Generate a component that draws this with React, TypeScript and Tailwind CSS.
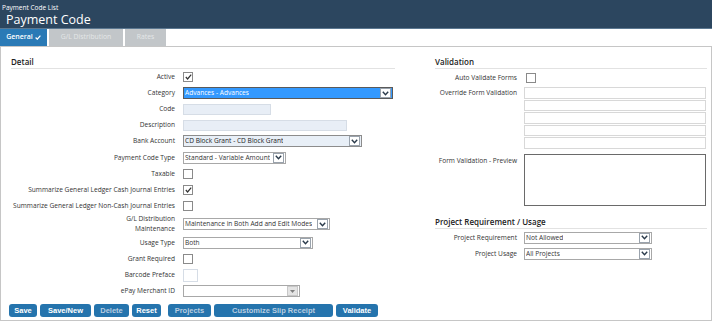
import React from 'react';

const Chevron = ({ muted = false }: { muted?: boolean }) => (
  <span className={`flex h-[10px] w-[11px] shrink-0 items-center justify-center border ${muted ? 'border-[#c8c8c8] bg-[#e4e4e4]' : 'border-[#9aa3ad] bg-white'}`}>
    {muted ? (
      <svg width="5" height="3" viewBox="0 0 5 3"><path d="M0 0h5L2.5 3z" fill="#808080" /></svg>
    ) : (
      <svg width="7" height="5" viewBox="0 0 7 5"><path d="M0.8 0.8L3.5 3.8L6.2 0.8" fill="none" stroke="#2a3a4a" strokeWidth="1.4" /></svg>
    )}
  </span>
);

const Select = ({ value, w, tone = 'white', muted = false }: { value: string; w: string; tone?: 'white' | 'blue' | 'active'; muted?: boolean }) => {
  const bg = tone === 'active' ? 'bg-[#3399ff] text-white border-[#5a5a5a]' : tone === 'blue' ? 'bg-[#e8eff7] text-[#222] border-[#8c8c8c]' : 'bg-white text-[#333] border-[#a8a8a8]';
  return (
    <div className={`flex h-[12px] items-center justify-between border pl-[1px] pr-[1px] ${bg} ${w}`}>
      <span className="overflow-hidden whitespace-nowrap leading-[10px]">{value}</span>
      <Chevron muted={muted} />
    </div>
  );
};

const Check = ({ checked = false }: { checked?: boolean }) => (
  <span className="flex h-[10px] w-[10px] items-center justify-center border border-[#8a8a8a] bg-white">
    {checked && (
      <svg width="7" height="6" viewBox="0 0 7 6"><path d="M0.8 3L2.6 5L6.2 0.6" fill="none" stroke="#333" strokeWidth="1.2" /></svg>
    )}
  </span>
);

const Input = ({ w, h = 'h-[11px]', bg = 'bg-[#e8eef6]' }: { w: string; h?: string; bg?: string }) => (
  <div className={`${w} ${h} ${bg} border border-[#d6dde6]`} />
);

const Row = ({ label, children, h = 'h-[16.1px]' }: { label: React.ReactNode; children: React.ReactNode; h?: string }) => (
  <div className={`flex items-center ${h}`}>
    <div className="w-[165px] pr-[1px] text-right leading-[10px] text-[#333]">{label}</div>
    <div className="ml-[7px] flex items-center">{children}</div>
  </div>
);

const Btn = ({ label, w, disabled = false }: { label: string; w: string; disabled?: boolean }) => (
  <button
    className={`${w} h-[13px] rounded-[3px] bg-[#2574ad] text-[7.5px] font-bold leading-none ${disabled ? 'text-[#b9cde0]' : 'text-white'}`}
    style={{ fontFamily: '"Liberation Sans", Arial, sans-serif' }}
  >
    {label}
  </button>
);

const Heading = ({ children, className = '' }: { children: React.ReactNode; className?: string }) => (
  <div className={`border-b border-[#e2e2e2] pb-[1px] text-[8px] font-semibold leading-[10px] text-[#222] ${className}`}>{children}</div>
);

export default function App() {
  return (
    <div className="flex h-[328px] w-[712px] flex-col bg-white text-[6.6px]" style={{ fontFamily: '"Open Sans", "Noto Sans", sans-serif' }}>
      {/* Header */}
      <div className="h-[29px] border-b border-[#5c7891] bg-[#2c465f] pl-[2px] text-white">
        <div className="pt-[4px] text-[6.5px] leading-[8px]">Payment Code List</div>
        <div className="pl-[4px] text-[12.5px] leading-[15px]">Payment Code</div>
      </div>

      {/* Tabs */}
      <div className="flex h-[18px] border-b border-[#c6c6c6]">
        <div className="flex w-[47px] items-center justify-center gap-[2px] bg-[#2a7ab6] text-[7px] font-semibold text-white">
          General
          <svg width="6" height="5" viewBox="0 0 6 5"><path d="M0.6 2.5L2.3 4.2L5.4 0.6" fill="none" stroke="white" strokeWidth="1.2" /></svg>
        </div>
        <div className="ml-[2px] flex w-[74px] items-center justify-center bg-[#c2c6c9] text-[6.8px] text-[#e4e6e8]">G/L Distribution</div>
        <div className="ml-[2px] flex w-[41px] items-center justify-center bg-[#c2c6c9] text-[6.8px] text-[#e4e6e8]">Rates</div>
      </div>

      {/* Body */}
      <div className="flex h-[274px] border-x border-b border-[#c6c6c6]">
        {/* Left column */}
        <div className="ml-[10px] flex w-[384px] flex-col pt-[10px]">
          <Heading>Detail</Heading>
          <Row label="Active"><Check checked /></Row>
          <Row label="Category"><Select value="Advances - Advances" w="w-[210px]" tone="active" /></Row>
          <Row label="Code"><Input w="w-[88px]" /></Row>
          <Row label="Description"><Input w="w-[164px]" /></Row>
          <Row label="Bank Account"><Select value="CD Block Grant - CD Block Grant" w="w-[179px]" tone="blue" /></Row>
          <Row label="Payment Code Type"><Select value="Standard - Variable Amount" w="w-[103px]" /></Row>
          <Row label="Taxable"><Check /></Row>
          <Row label="Summarize General Ledger Cash Journal Entries"><Check checked /></Row>
          <Row label="Summarize General Ledger Non-Cash Journal Entries"><Check /></Row>
          <Row h="h-[21px]" label={<><div>G/L Distribution</div><div>Maintenance</div></>}>
            <Select value="Maintenance in Both Add and Edit Modes" w="w-[147px]" />
          </Row>
          <Row label="Usage Type"><Select value="Both" w="w-[130px]" /></Row>
          <Row label="Grant Required"><Check /></Row>
          <Row label="Barcode Preface"><Input w="w-[15px]" h="h-[13px]" bg="bg-white" /></Row>
          <Row label="ePay Merchant ID"><Select value="" w="w-[117px]" muted /></Row>
          <div className="-ml-[2px] mt-[5px] flex gap-[3px]">
            <Btn label="Save" w="w-[28px]" />
            <Btn label="Save/New" w="w-[51px]" />
            <Btn label="Delete" w="w-[35px]" disabled />
            <Btn label="Reset" w="w-[29px]" />
            <div className="w-[1px]" />
            <Btn label="Projects" w="w-[43px]" disabled />
            <Btn label="Customize Slip Receipt" w="w-[119px]" disabled />
            <Btn label="Validate" w="w-[42px]" />
          </div>
        </div>

        {/* Right column */}
        <div className="ml-[40px] flex w-[272px] flex-col pt-[10px]">
          <Heading>Validation</Heading>
          <div className="mt-[4px] flex items-center">
            <div className="w-[82px] text-right text-[#333]">Auto Validate Forms</div>
            <div className="ml-[9px]"><Check /></div>
          </div>
          <div className="mt-[4px] flex">
            <div className="w-[82px] pt-[1px] text-right leading-[10px] text-[#333]">Override Form Validation</div>
            <div className="ml-[7px] flex flex-col gap-[1px]">
              {[0, 1, 2, 3, 4].map((i) => (
                <div key={i} className="h-[11.5px] w-[182px] border border-[#d8d8d8] bg-white" />
              ))}
            </div>
          </div>
          <div className="mt-[5px] flex">
            <div className="w-[82px] pt-[2px] text-right leading-[10px] text-[#333]">Form Validation - Preview</div>
            <div className="ml-[7px] h-[52px] w-[182px] border border-[#6a6a6a] bg-white" />
          </div>
          <Heading className="mt-[11px]">Project Requirement / Usage</Heading>
          <div className="mt-[3px] flex items-center">
            <div className="w-[82px] text-right text-[#333]">Project Requirement</div>
            <div className="ml-[7px]"><Select value="Not Allowed" w="w-[128px]" /></div>
          </div>
          <div className="mt-[4px] flex items-center">
            <div className="w-[82px] text-right text-[#333]">Project Usage</div>
            <div className="ml-[7px]"><Select value="All Projects" w="w-[128px]" /></div>
          </div>
        </div>
      </div>
    </div>
  );
}
